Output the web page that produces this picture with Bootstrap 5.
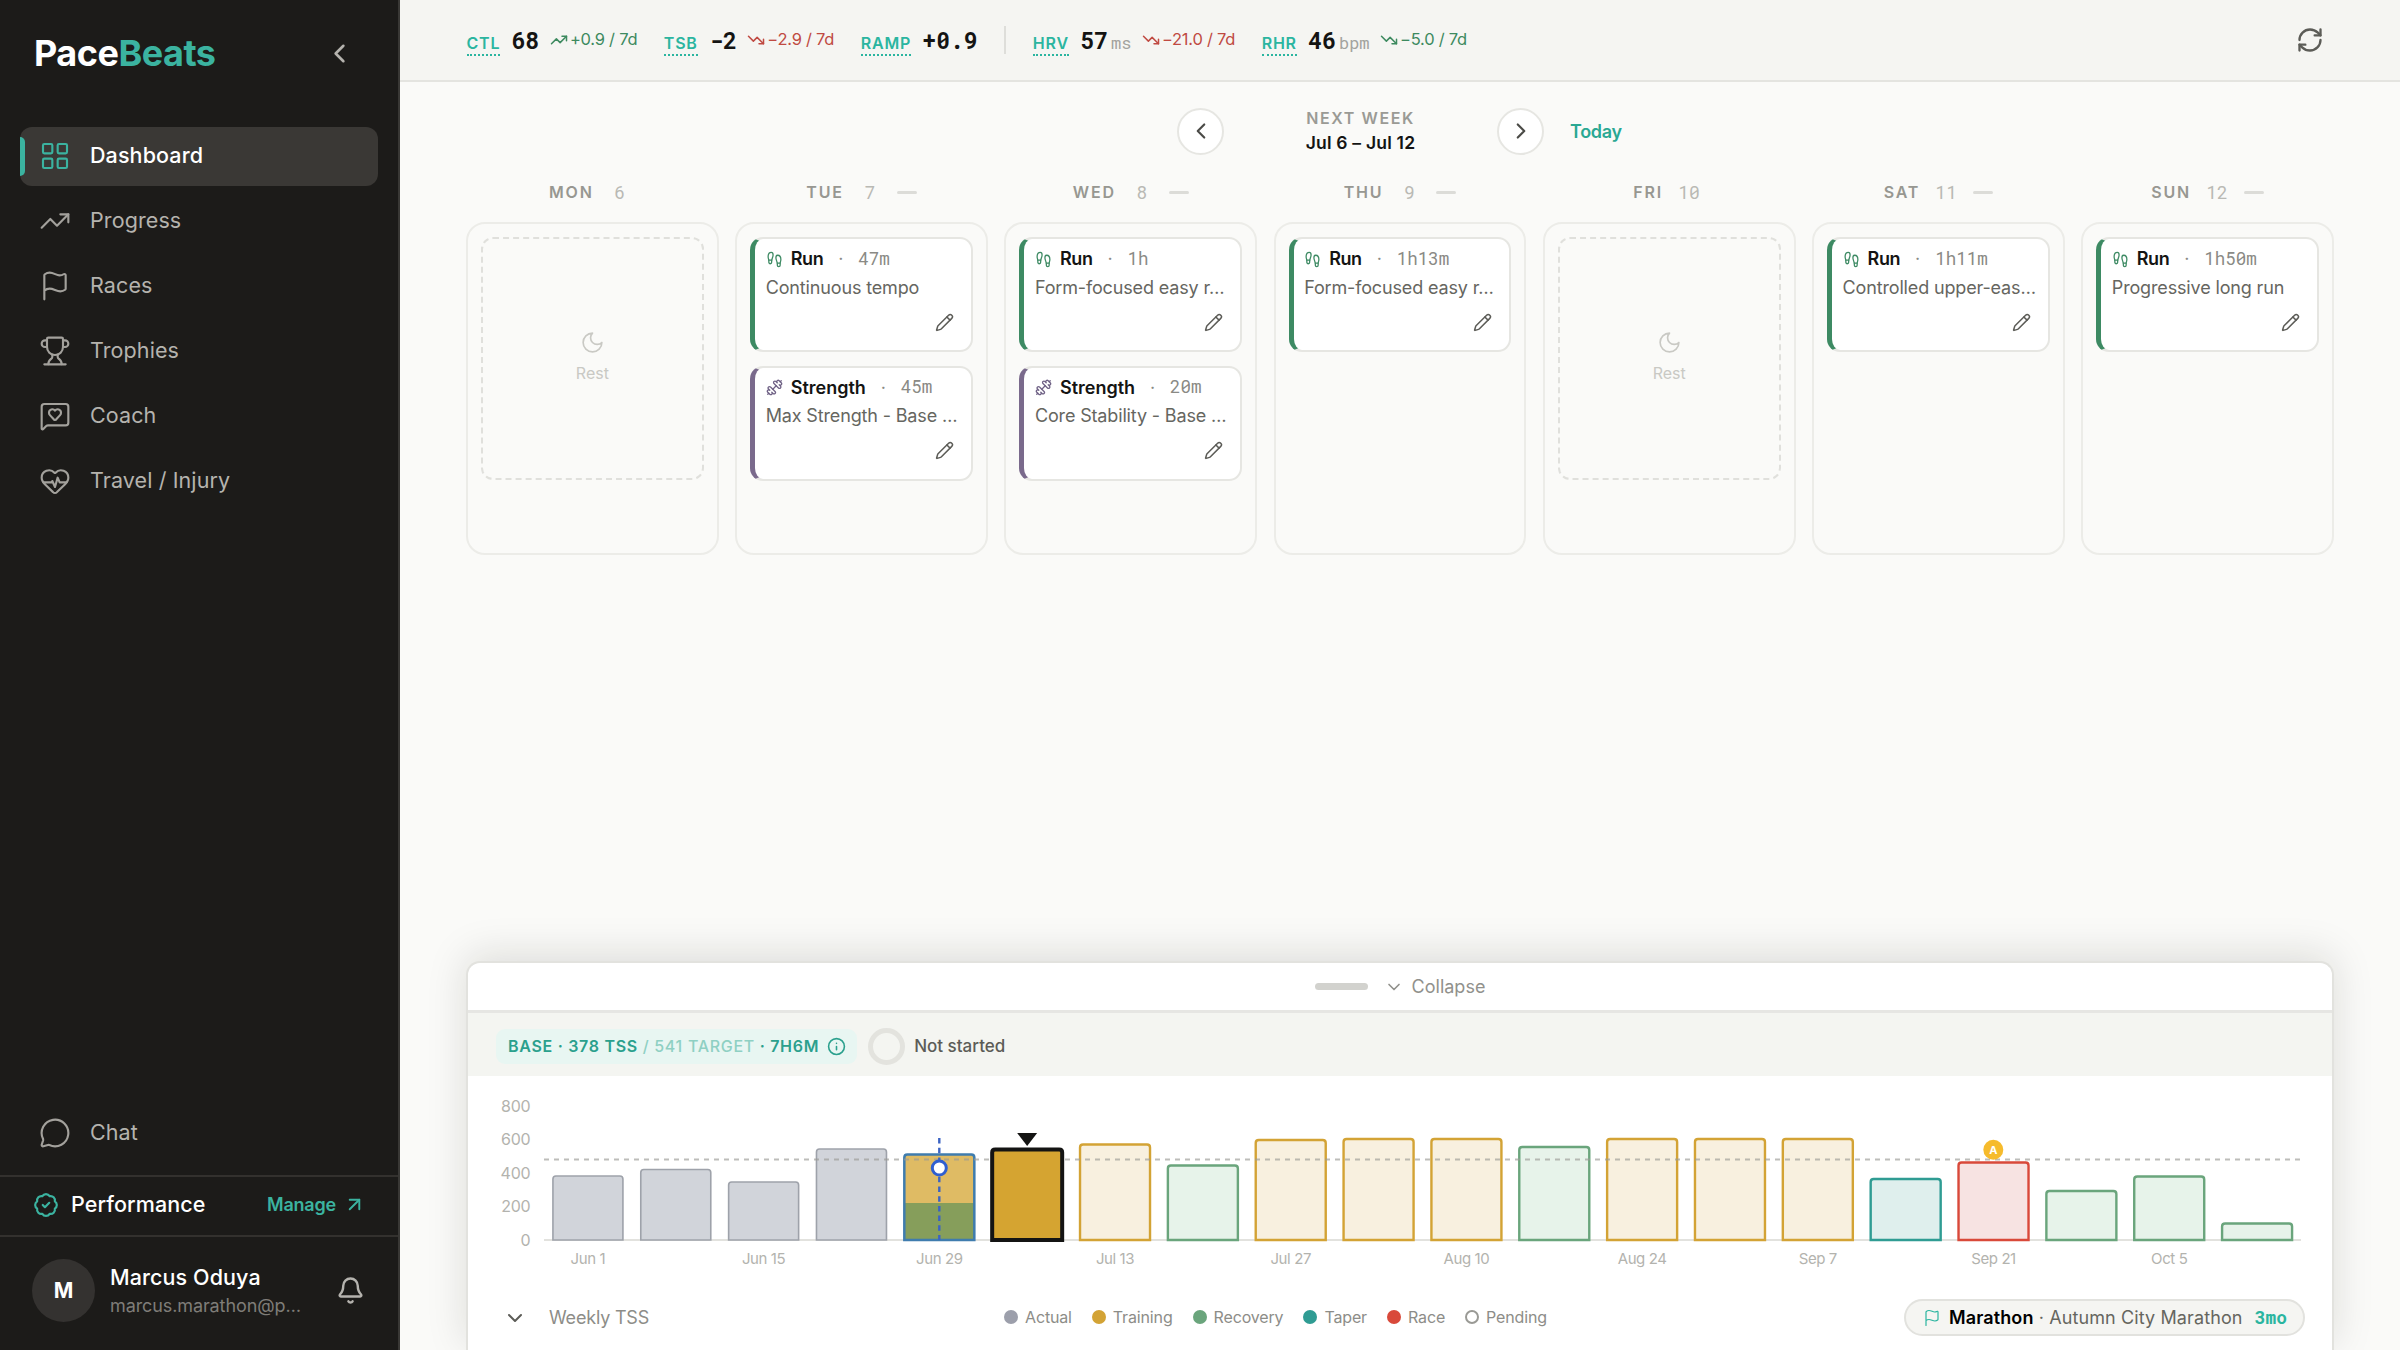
<!DOCTYPE html>
<html lang="en">
<head>
  <meta charset="UTF-8">
  <meta name="viewport" content="width=device-width, initial-scale=1">
  <title>PaceBeats - Dashboard</title>
  <link rel="stylesheet" href="https://cdn.jsdelivr.net/npm/bootstrap@5.3.0/dist/css/bootstrap.min.css">
  <style>
    :root {
      --teal: #2bb5a0;
      --side: #1c1b19;
    }
    body {
      font-family: Inter, "Liberation Sans", sans-serif;
      font-size: 18px;
      line-height: 1.3;
      color: #141413;
      background: #fafaf8;
    }
    .ico { fill: none; stroke: currentColor; stroke-width: 1.6; stroke-linecap: round; stroke-linejoin: round; flex: none; display: block; }
    .ico.thick { stroke-width: 2; }
    .mono { font-family: "Roboto Mono", "DejaVu Sans Mono", monospace; }
    .app { height: 1350px; }
    a { text-decoration: none; }

    /* sidebar */
    .sidebar { width: 400px; flex: none; background: var(--side); border-right: 2px solid #393835; color: #b5b3ae; }
    .brand { height: 106px; padding: 0 43px 0 34px; }
    .brand-name { font-size: 36px; font-weight: 700; letter-spacing: -.5px; color: #fff; }
    .brand-name span { color: #3bb3a0; }
    .side-nav { padding: 20.5px 20px 0 20px; gap: 6px; }
    .side-link { height: 59px; padding-left: 19px; gap: 19px; border-radius: 12px; color: #b5b3ae; font-size: 21.5px; letter-spacing: .1px; }
    .side-link.active { background: #3a3835; color: #fff; font-weight: 500; position: relative; }
    .side-link.active::before { content: ""; position: absolute; left: 0; top: 10px; width: 5px; height: 39px; border-radius: 0 5px 5px 0; background: #3bb3a0; }
    .side-link.active svg { color: #3bb3a0; }
    .side-link svg { width: 32px; height: 32px; color: #a3a19c; }
    .side-link.bottom { margin: auto 0 13px; }
    .plan-row { height: 62px; border-top: 2px solid #33312e; border-bottom: 2px solid #33312e; padding: 0 32px 3px 33px; }
    .plan-name { font-size: 21.5px; font-weight: 500; letter-spacing: .1px; color: #fff; }
    .plan-link { color: #3bb3a0; font-weight: 600; letter-spacing: -.2px; gap: 7px; }
    .user-row { height: 113px; padding: 0 33px 6px 32px; gap: 15px; }
    .avatar { width: 63px; height: 63px; border-radius: 50%; background: #343230; color: #fff; font-weight: 700; font-size: 21px; flex: none; }
    .user-name { font-size: 21.5px; font-weight: 500; letter-spacing: .1px; color: #fff; line-height: 29px; }
    .user-mail { font-size: 18px; letter-spacing: -.1px; color: #7f7d78; line-height: 27px; }

    /* metrics bar */
    .metrics { height: 82px; background: #f5f5f2; border-bottom: 2px solid #e4e4e0; padding: 0 76px 0 66.5px; }
    .metric-list { gap: 26.5px; }
    .m-label { font-size: 16px; font-weight: 600; letter-spacing: .8px; color: var(--teal); border-bottom: 2px dotted var(--teal); line-height: 21px; }
    .m-value { font-size: 23px; font-weight: 700; margin-left: 11.5px; line-height: 30px; }
    .m-unit { font-size: 17px; color: #a3a39e; margin-left: 3px; }
    .trend { font-size: 16.5px; letter-spacing: -.25px; margin-left: 10.5px; gap: 2px; }
    .trend svg { width: 18px; height: 18px; stroke-width: 2; }
    .up { color: #3d8a5f; }
    .down { color: #c04a42; }
    .v-sep { width: 2px; height: 28px; background: #dededa; }

    /* week */
    .week-nav { height: 99px; padding-bottom: 1px; }
    .round-btn { width: 47px; height: 47px; border-radius: 50%; border: 2px solid #e6e6e2; background: #fff; color: #4b4b47; flex: none; }
    .week-title { width: 273px; text-align: center; padding-top: 1px; }
    .week-kicker { font-size: 16px; font-weight: 600; letter-spacing: 1.6px; color: #9a9a95; line-height: 23px; }
    .week-range { font-size: 17.5px; font-weight: 600; letter-spacing: .2px; line-height: 26px; }
    .today { width: 53px; margin-left: 26px; padding-top: 2px; color: #2aa893; font-weight: 600; letter-spacing: -.3px; }
    .week { display: grid; grid-template-columns: repeat(7, minmax(0, 1fr)); column-gap: 16.5px; padding: 0 66px; }
    .day-head { height: 23px; font-size: 16px; font-weight: 600; color: #979791; letter-spacing: 1.8px; }
    .day-num { width: 32px; text-align: center; font-size: 18px; font-weight: 400; letter-spacing: 0; color: #b9b9b4; margin: 0 11px 0 10px; }
    .day-num.last { margin-right: 0; }
    .day-dash { width: 20px; height: 3px; border-radius: 2px; background: #dcdcd8; }
    .day-col { margin-top: 18px; height: 333px; border: 2px solid #ecece8; border-radius: 19px; padding: 13px; gap: 13.5px; }
    .rest-box { height: 243px; border: 2px dashed #e0e0dc; border-radius: 12px; color: #c9c9c4; font-size: 16px; gap: 8px; padding-bottom: 4px; }
    .workout { height: 115px; background: #fff; border: 2px solid #e6e6e2; border-left-width: 5px; border-radius: 13px; padding: 8.5px 10px 0 10.5px; }
    .workout.run { border-left-color: #3d8a63; }
    .workout.strength { border-left-color: #7a6a8c; }
    .w-head { height: 23px; gap: 8px; }
    .w-head svg { width: 17px; height: 17px; stroke-width: 1.8; }
    .run .w-head svg { color: #3d8a63; }
    .strength .w-head svg { color: #6f6185; }
    .w-name { font-weight: 600; }
    .run .w-name { letter-spacing: -.4px; }
    .w-dot { width: 19px; text-align: center; color: #8a8a85; }
    .w-time { font-size: 17.5px; color: #8a8a85; }
    .w-title { color: #66665f; line-height: 24px; letter-spacing: -.15px; margin-top: 5px; }
    .w-edit { margin: 13px 7px 0 auto; width: 19px; height: 19px; color: #5c5c57; stroke-width: 1.9; }

    /* drawer */
    .drawer { margin: 0 66px; height: 389px; background: #fff; border: 2px solid #e2e2de; border-bottom: 0; border-radius: 14px 14px 0 0; box-shadow: 0 -6px 40px rgba(20, 20, 15, .13); overflow: hidden; }
    .handle-row { height: 50px; border-bottom: 3px solid #e6e6e3; color: #91918c; }
    .grab { width: 53px; height: 7px; border-radius: 4px; background: #d2d2ce; }
    .phase-row { height: 63px; background: #f4f5f1; padding: 3px 28px 0; gap: 11px; }
    .phase-pill { height: 35px; border-radius: 9px; background: #e8f6f2; color: #2ba08d; font-size: 16px; font-weight: 600; letter-spacing: .7px; padding: 0 11px 0 12px; }
    .phase-pill .soft { font-weight: 500; color: #8fd0c3; }
    .ring { width: 37px; height: 37px; border: 5px solid #e3e3de; border-radius: 50%; }
    .phase-state { font-size: 17px; font-weight: 500; color: #5c5c57; margin-left: -2px; }
    .chart { display: block; width: 1862px; height: 210px; }
    .chart text { font-size: 15px; letter-spacing: -.4px; fill: #b3b3ae; }
    .chart .y-lab { font-size: 16px; letter-spacing: -.2px; text-anchor: end; }
    .chart .x-lab { text-anchor: middle; }
    .chart .race-mark { font-size: 11px; font-weight: 700; fill: #fff; text-anchor: middle; letter-spacing: 0; }
    .drawer-foot { height: 63px; padding: 0 27px 0 35px; color: #8d8d88; }
    .foot-title { margin-left: 22px; letter-spacing: -.2px; }
    .legend { gap: 20px; font-size: 16px; letter-spacing: -.15px; position: absolute; left: 536px; }
    .legend span { gap: 7px; }
    .legend i { width: 14px; height: 14px; border-radius: 50%; }
    .goal { height: 37px; border: 2px solid #e2e2de; border-radius: 19px; background: #f5f5f2; padding: 0 16px 0 17px; color: #66665f; letter-spacing: .11px; }
    .goal svg { margin-right: 8px; color: var(--teal); }
    .goal .mono { color: var(--teal); letter-spacing: 0; margin-left: 12px; }
  </style>
</head>
<body>
  <svg class="d-none">
    <symbol id="i-left" viewBox="0 0 24 24"><path d="m15 18-6-6 6-6"/></symbol>
    <symbol id="i-right" viewBox="0 0 24 24"><path d="m9 18 6-6-6-6"/></symbol>
    <symbol id="i-down" viewBox="0 0 24 24"><path d="m6 9 6 6 6-6"/></symbol>
    <symbol id="i-grid" viewBox="0 0 24 24"><rect x="3" y="3" width="7" height="7" rx="1"/><rect x="14" y="3" width="7" height="7" rx="1"/><rect x="14" y="14" width="7" height="7" rx="1"/><rect x="3" y="14" width="7" height="7" rx="1"/></symbol>
    <symbol id="i-up" viewBox="0 0 24 24"><path d="M16 7h6v6"/><path d="m22 7-8.5 8.5-5-5L2 17"/></symbol>
    <symbol id="i-dn" viewBox="0 0 24 24"><path d="M16 17h6v-6"/><path d="m22 17-8.5-8.5-5 5L2 7"/></symbol>
    <symbol id="i-flag" viewBox="0 0 24 24"><path d="M4 22V4a1 1 0 0 1 .4-.8A6 6 0 0 1 8 2c3 0 5 2 7.333 2q2 0 3.067-.8A1 1 0 0 1 20 4v10a1 1 0 0 1-.4.8A6 6 0 0 1 16 16c-3 0-5-2-8-2a6 6 0 0 0-4 1.528"/></symbol>
    <symbol id="i-trophy" viewBox="0 0 24 24"><path d="M10 14.66v1.626a2 2 0 0 1-.976 1.696A5 5 0 0 0 7 21.978"/><path d="M14 14.66v1.626a2 2 0 0 0 .976 1.696A5 5 0 0 1 17 21.978"/><path d="M18 9h1.5a1 1 0 0 0 0-5H18"/><path d="M4 22h16"/><path d="M6 9a6 6 0 0 0 12 0V3a1 1 0 0 0-1-1H7a1 1 0 0 0-1 1z"/><path d="M6 9H4.5a1 1 0 0 1 0-5H6"/></symbol>
    <symbol id="i-coach" viewBox="0 0 24 24"><path d="M22 17a2 2 0 0 1-2 2H6.828a2 2 0 0 0-1.414.586l-2.202 2.202A.71.71 0 0 1 2 21.286V5a2 2 0 0 1 2-2h16a2 2 0 0 1 2 2z"/><path d="M7.5 9.5c0 .687.265 1.383.697 1.844l3.009 3.264a1.14 1.14 0 0 0 .407.314 1 1 0 0 0 .783-.004 1.14 1.14 0 0 0 .398-.31l3.008-3.264A2.77 2.77 0 0 0 16.5 9.5 2.5 2.5 0 0 0 12 8a2.5 2.5 0 0 0-4.5 1.5"/></symbol>
    <symbol id="i-pulse" viewBox="0 0 24 24"><path d="M2 9.5a5.5 5.5 0 0 1 9.591-3.676.56.56 0 0 0 .818 0A5.49 5.49 0 0 1 22 9.5c0 2.29-1.5 4-3 5.5l-5.492 5.313a2 2 0 0 1-3 .019L5 15c-1.5-1.5-3-3.2-3-5.5"/><path d="M3.22 13H9.5l.5-1 2 4.5 2-7 1.5 3.5h5.27"/></symbol>
    <symbol id="i-chat" viewBox="0 0 24 24"><path d="M2.992 16.342a2 2 0 0 1 .094 1.167l-1.065 3.29a1 1 0 0 0 1.236 1.168l3.413-.998a2 2 0 0 1 1.099.092 10 10 0 1 0-4.777-4.719"/></symbol>
    <symbol id="i-badge" viewBox="0 0 24 24"><path d="M3.85 8.62a4 4 0 0 1 4.78-4.77 4 4 0 0 1 6.74 0 4 4 0 0 1 4.78 4.78 4 4 0 0 1 0 6.74 4 4 0 0 1-4.77 4.78 4 4 0 0 1-6.75 0 4 4 0 0 1-4.78-4.77 4 4 0 0 1 0-6.76Z"/><path d="m9 12 2 2 4-4"/></symbol>
    <symbol id="i-out" viewBox="0 0 24 24"><path d="M7 7h10v10"/><path d="M7 17 17 7"/></symbol>
    <symbol id="i-bell" viewBox="0 0 24 24"><path d="M10.268 21a2 2 0 0 0 3.464 0"/><path d="M3.262 15.326A1 1 0 0 0 4 17h16a1 1 0 0 0 .74-1.673C19.41 13.956 18 12.499 18 8A6 6 0 0 0 6 8c0 4.499-1.411 5.956-2.738 7.326"/></symbol>
    <symbol id="i-sync" viewBox="0 0 24 24"><path d="M3 12a9 9 0 0 1 9-9 9.75 9.75 0 0 1 6.74 2.74L21 8"/><path d="M21 3v5h-5"/><path d="M21 12a9 9 0 0 1-9 9 9.75 9.75 0 0 1-6.74-2.74L3 16"/><path d="M8 16H3v5"/></symbol>
    <symbol id="i-run" viewBox="0 0 24 24"><path d="M4 16v-2.38C4 11.5 2.97 10.5 3 8c.03-2.72 1.49-6 4.5-6C9.37 2 10 3.8 10 5.5c0 3.11-2 5.66-2 8.68V16a2 2 0 1 1-4 0Z"/><path d="M20 20v-2.38c0-2.12 1.03-3.12 1-5.62-.03-2.72-1.49-6-4.5-6C14.63 6 14 7.8 14 9.5c0 3.11 2 5.66 2 8.68V20a2 2 0 1 0 4 0Z"/><path d="M16 17h4"/><path d="M4 13h4"/></symbol>
    <symbol id="i-strength" viewBox="0 0 24 24"><path d="M17.596 12.768a2 2 0 1 0 2.829-2.829l-1.768-1.767a2 2 0 0 0 2.828-2.829l-2.828-2.828a2 2 0 0 0-2.829 2.828l-1.767-1.768a2 2 0 1 0-2.829 2.829z"/><path d="m2.5 21.5 1.4-1.4"/><path d="m20.1 3.9 1.4-1.4"/><path d="M5.343 21.485a2 2 0 1 0 2.829-2.828l1.767 1.768a2 2 0 1 0 2.829-2.829l-6.364-6.364a2 2 0 1 0-2.829 2.829l1.768 1.767a2 2 0 0 0-2.828 2.829z"/><path d="m9.6 14.4 4.8-4.8"/></symbol>
    <symbol id="i-pencil" viewBox="0 0 24 24"><path d="M21.174 6.812a1 1 0 0 0-3.986-3.987L3.842 16.174a2 2 0 0 0-.5.83l-1.321 4.352a.5.5 0 0 0 .623.622l4.353-1.32a2 2 0 0 0 .83-.497z"/><path d="m15 5 4 4"/></symbol>
    <symbol id="i-moon" viewBox="0 0 24 24"><path d="M12 3a6 6 0 0 0 9 9 9 9 0 1 1-9-9Z"/></symbol>
    <symbol id="i-info" viewBox="0 0 24 24"><circle cx="12" cy="12" r="10"/><path d="M12 16v-4M12 8h.01"/></symbol>
  </svg>

  <div class="app d-flex overflow-hidden">
    <aside class="sidebar d-flex flex-column">
      <div class="brand d-flex align-items-center justify-content-between">
        <div class="brand-name">Pace<span>Beats</span></div>
        <svg class="ico thick" width="31" height="31"><use href="#i-left"/></svg>
      </div>
      <nav class="side-nav d-flex flex-column flex-grow-1">
        <a href="#" class="side-link d-flex align-items-center active"><svg class="ico"><use href="#i-grid"/></svg>Dashboard</a>
        <a href="#" class="side-link d-flex align-items-center"><svg class="ico"><use href="#i-up"/></svg>Progress</a>
        <a href="#" class="side-link d-flex align-items-center"><svg class="ico"><use href="#i-flag"/></svg>Races</a>
        <a href="#" class="side-link d-flex align-items-center"><svg class="ico"><use href="#i-trophy"/></svg>Trophies</a>
        <a href="#" class="side-link d-flex align-items-center"><svg class="ico"><use href="#i-coach"/></svg>Coach</a>
        <a href="#" class="side-link d-flex align-items-center"><svg class="ico"><use href="#i-pulse"/></svg>Travel / Injury</a>
        <a href="#" class="side-link bottom d-flex align-items-center"><svg class="ico"><use href="#i-chat"/></svg>Chat</a>
      </nav>
      <div class="plan-row d-flex align-items-center">
        <svg class="ico thick me-2" width="26" height="26" color="#3bb3a0"><use href="#i-badge"/></svg>
        <span class="plan-name ms-1">Performance</span>
        <a href="#" class="plan-link d-flex align-items-center ms-auto">Manage <svg class="ico thick" width="23" height="23"><use href="#i-out"/></svg></a>
      </div>
      <div class="user-row d-flex align-items-center">
        <div class="avatar d-flex align-items-center justify-content-center">M</div>
        <div class="flex-grow-1">
          <div class="user-name">Marcus Oduya</div>
          <div class="user-mail">marcus.marathon@p…</div>
        </div>
        <svg class="ico thick" width="29" height="29"><use href="#i-bell"/></svg>
      </div>
    </aside>

    <main class="flex-grow-1 d-flex flex-column">
      <header class="metrics d-flex align-items-center justify-content-between">
        <div class="metric-list d-flex align-items-center" id="metrics"></div>
        <svg class="ico thick" width="28" height="28" color="#5c5c57"><use href="#i-sync"/></svg>
      </header>

      <div class="week-nav d-flex align-items-center justify-content-center">
        <button class="round-btn d-flex align-items-center justify-content-center p-0"><svg class="ico thick" width="26" height="26"><use href="#i-left"/></svg></button>
        <div class="week-title">
          <div class="week-kicker">NEXT WEEK</div>
          <div class="week-range">Jul 6 – Jul 12</div>
        </div>
        <button class="round-btn d-flex align-items-center justify-content-center p-0"><svg class="ico thick" width="26" height="26"><use href="#i-right"/></svg></button>
        <a href="#" class="today">Today</a>
      </div>

      <section class="week" id="week"></section>

      <section class="drawer mt-auto">
        <div class="handle-row d-flex align-items-center justify-content-center">
          <div class="grab me-3"></div>
          <svg class="ico thick" width="20" height="20"><use href="#i-down"/></svg>
          <span class="ms-2">Collapse</span>
        </div>
        <div class="phase-row d-flex align-items-center">
          <div class="phase-pill d-flex align-items-center">
            <span>BASE · 378 TSS <span class="soft">/ 541 TARGET</span> · 7H6M</span>
            <svg class="ico thick ms-2" width="19" height="19"><use href="#i-info"/></svg>
          </div>
          <div class="ring"></div>
          <div class="phase-state">Not started</div>
        </div>
        <svg class="chart" id="chart" viewBox="469 1076 1862 210"></svg>
        <div class="drawer-foot d-flex align-items-center justify-content-between position-relative">
          <div class="d-flex align-items-center">
            <svg class="ico thick" width="24" height="24" color="#5c5c57"><use href="#i-down"/></svg>
            <span class="foot-title">Weekly TSS</span>
          </div>
          <div class="legend d-flex align-items-center" id="legend"></div>
          <div class="goal d-flex align-items-center">
            <svg class="ico" width="18" height="18"><use href="#i-flag"/></svg>
            <span><b class="fw-semibold text-black">Marathon</b> · Autumn City Marathon</span>
            <b class="mono">3mo</b>
          </div>
        </div>
      </section>
    </main>
  </div>

  <script>
    const icon = (name, cls = '') => `<svg class="ico ${cls}"><use href="#i-${name}"/></svg>`;

    const metrics = [
      { label: 'CTL', value: '68', trend: '+0.9', dir: 'up', tone: 'up' },
      { label: 'TSB', value: '-2', trend: '−2.9', dir: 'dn', tone: 'down' },
      { label: 'RAMP', value: '+0.9' },
      null,
      { label: 'HRV', value: '57', unit: 'ms', trend: '−21.0', dir: 'dn', tone: 'down' },
      { label: 'RHR', value: '46', unit: 'bpm', trend: '−5.0', dir: 'dn', tone: 'up' }
    ];
    document.getElementById('metrics').innerHTML = metrics.map(m => {
      if (!m) return '<div class="v-sep"></div>';
      return `<div class="d-flex align-items-center">
        <div class="d-flex align-items-baseline">
          <span class="m-label">${m.label}</span>
          <span class="m-value mono">${m.value}</span>
          ${m.unit ? `<span class="m-unit mono">${m.unit}</span>` : ''}
        </div>
        ${m.trend ? `<span class="trend d-flex align-items-center ${m.tone}">${icon(m.dir)}${m.trend} / 7d</span>` : ''}
      </div>`;
    }).join('');

    const days = [
      { name: 'MON', num: 6, items: [] },
      { name: 'TUE', num: 7, items: [['run', 'Run', '47m', 'Continuous tempo'], ['strength', 'Strength', '45m', 'Max Strength - Base …']] },
      { name: 'WED', num: 8, items: [['run', 'Run', '1h', 'Form-focused easy r…'], ['strength', 'Strength', '20m', 'Core Stability - Base …']] },
      { name: 'THU', num: 9, items: [['run', 'Run', '1h13m', 'Form-focused easy r…']] },
      { name: 'FRI', num: 10, items: [] },
      { name: 'SAT', num: 11, items: [['run', 'Run', '1h11m', 'Controlled upper-eas…']] },
      { name: 'SUN', num: 12, items: [['run', 'Run', '1h50m', 'Progressive long run']] }
    ];
    document.getElementById('week').innerHTML = days.map(d => {
      const rest = d.items.length === 0;
      const body = rest
        ? `<div class="rest-box d-flex flex-column align-items-center justify-content-center">
            <svg class="ico" width="25" height="25"><use href="#i-moon"/></svg>Rest</div>`
        : d.items.map(([type, name, time, title]) => `<div class="workout ${type}">
            <div class="w-head d-flex align-items-center">${icon(type)}<span class="w-name">${name}</span>
              <span class="w-dot">·</span><span class="w-time mono">${time}</span></div>
            <div class="w-title text-nowrap">${title}</div>
            ${icon('pencil', 'w-edit')}
          </div>`).join('');
      return `<div>
        <div class="day-head d-flex align-items-center justify-content-center">${d.name}
          <span class="day-num mono ${rest ? 'last' : ''}">${d.num}</span>${rest ? '' : '<span class="day-dash"></span>'}</div>
        <div class="day-col d-flex flex-column">${body}</div>
      </div>`;
    }).join('');

    // weekly load chart: [top y, kind, label]
    const kinds = {
      actual: ['#d1d4da', '#9ea2aa'],
      training: ['#f8f0df', '#d3a335'],
      recovery: ['#e7f3ea', '#6aa57c'],
      taper: ['#dfefed', '#2f9c93'],
      race: ['#f7e3e2', '#d9493a']
    };
    const weeks = [
      [1176, 'actual', 'Jun 1'], [1169.5, 'actual'], [1182, 'actual', 'Jun 15'], [1149, 'actual'],
      [1154.5, 'current', 'Jun 29'], [1149.5, 'selected'], [1144.5, 'training', 'Jul 13'], [1165.5, 'recovery'],
      [1140, 'training', 'Jul 27'], [1139, 'training'], [1139, 'training', 'Aug 10'], [1147, 'recovery'],
      [1139, 'training', 'Aug 24'], [1139, 'training'], [1139, 'training', 'Sep 7'], [1179, 'taper'],
      [1162.5, 'race', 'Sep 21'], [1191, 'recovery'], [1176.5, 'recovery', 'Oct 5'], [1223.5, 'recovery']
    ];
    const base = 1240, left = 545, step = 87.85, barW = 70;
    const barPath = (x, y, w) => `M${x} ${base}V${y + 3}q0 -3 3 -3H${x + w - 3}q3 0 3 3V${base}Z`;
    let svg = '';
    [800, 600, 400, 200, 0].forEach(v => {
      svg += `<text class="y-lab" x="531.5" y="${base + 5.5 - v * 0.167}">${v}</text>`;
    });
    svg += `<path d="M545 ${base}H2302" stroke="#e2e2de" stroke-width="2"/>`;
    weeks.forEach(([y, kind, label], i) => {
      const cx = left + step * (i + .5), x = cx - barW / 2;
      if (kind === 'current') {
        svg += `<path d="${barPath(x, y, barW)}" fill="#dfbb64"/>
          <path d="M${x} 1203H${x + barW}V${base}H${x}Z" fill="#869e5b"/>
          <path d="${barPath(x, y, barW)}" fill="none" stroke="#3f7cae" stroke-width="2.5"/>`;
      } else if (kind === 'selected') {
        svg += `<path d="${barPath(x, y, barW)}" fill="#d5a431" stroke="#141413" stroke-width="4"/>
          <path d="M${cx - 10} 1133H${cx + 10}L${cx} 1146Z" fill="#141413"/>`;
      } else {
        const [fill, stroke] = kinds[kind];
        svg += `<path d="${barPath(x, y, barW)}" fill="${fill}" stroke="${stroke}" stroke-width="${kind === 'actual' ? 1.6 : 2.4}"/>`;
      }
      if (label) svg += `<text class="x-lab" x="${cx}" y="1264">${label}</text>`;
    });
    // average line (hidden behind the selected week), today marker, race badge
    svg += `<path d="M545 1159.5H992M1066 1159.5H2302" stroke="#9a9a95" stroke-opacity=".65" stroke-width="1.8" stroke-dasharray="5 5"/>
      <path d="M940.3 1138V1240" stroke="#3b63c4" stroke-width="2.4" stroke-dasharray="5.5 4.2"/>
      <circle cx="940.3" cy="1168" r="7" fill="#fff" stroke="#2f5fd0" stroke-width="3"/>
      <circle cx="1994.3" cy="1149.7" r="10" fill="#f6bb2c"/>
      <text class="race-mark" x="1994.3" y="1153.7">A</text>`;
    document.getElementById('chart').innerHTML = svg;

    const legend = [['Actual', '#9c9fab'], ['Training', '#d3a335'], ['Recovery', '#6aa57c'], ['Taper', '#2f9c93'], ['Race', '#d9493a'], ['Pending', null]];
    document.getElementById('legend').innerHTML = legend.map(([name, color]) =>
      `<span class="d-flex align-items-center"><i style="${color ? 'background:' + color : 'border:2px solid #9a9a95'}"></i>${name}</span>`
    ).join('');
  </script>
  <script src="https://cdn.jsdelivr.net/npm/bootstrap@5.3.0/dist/js/bootstrap.bundle.min.js"></script>
</body>
</html>
